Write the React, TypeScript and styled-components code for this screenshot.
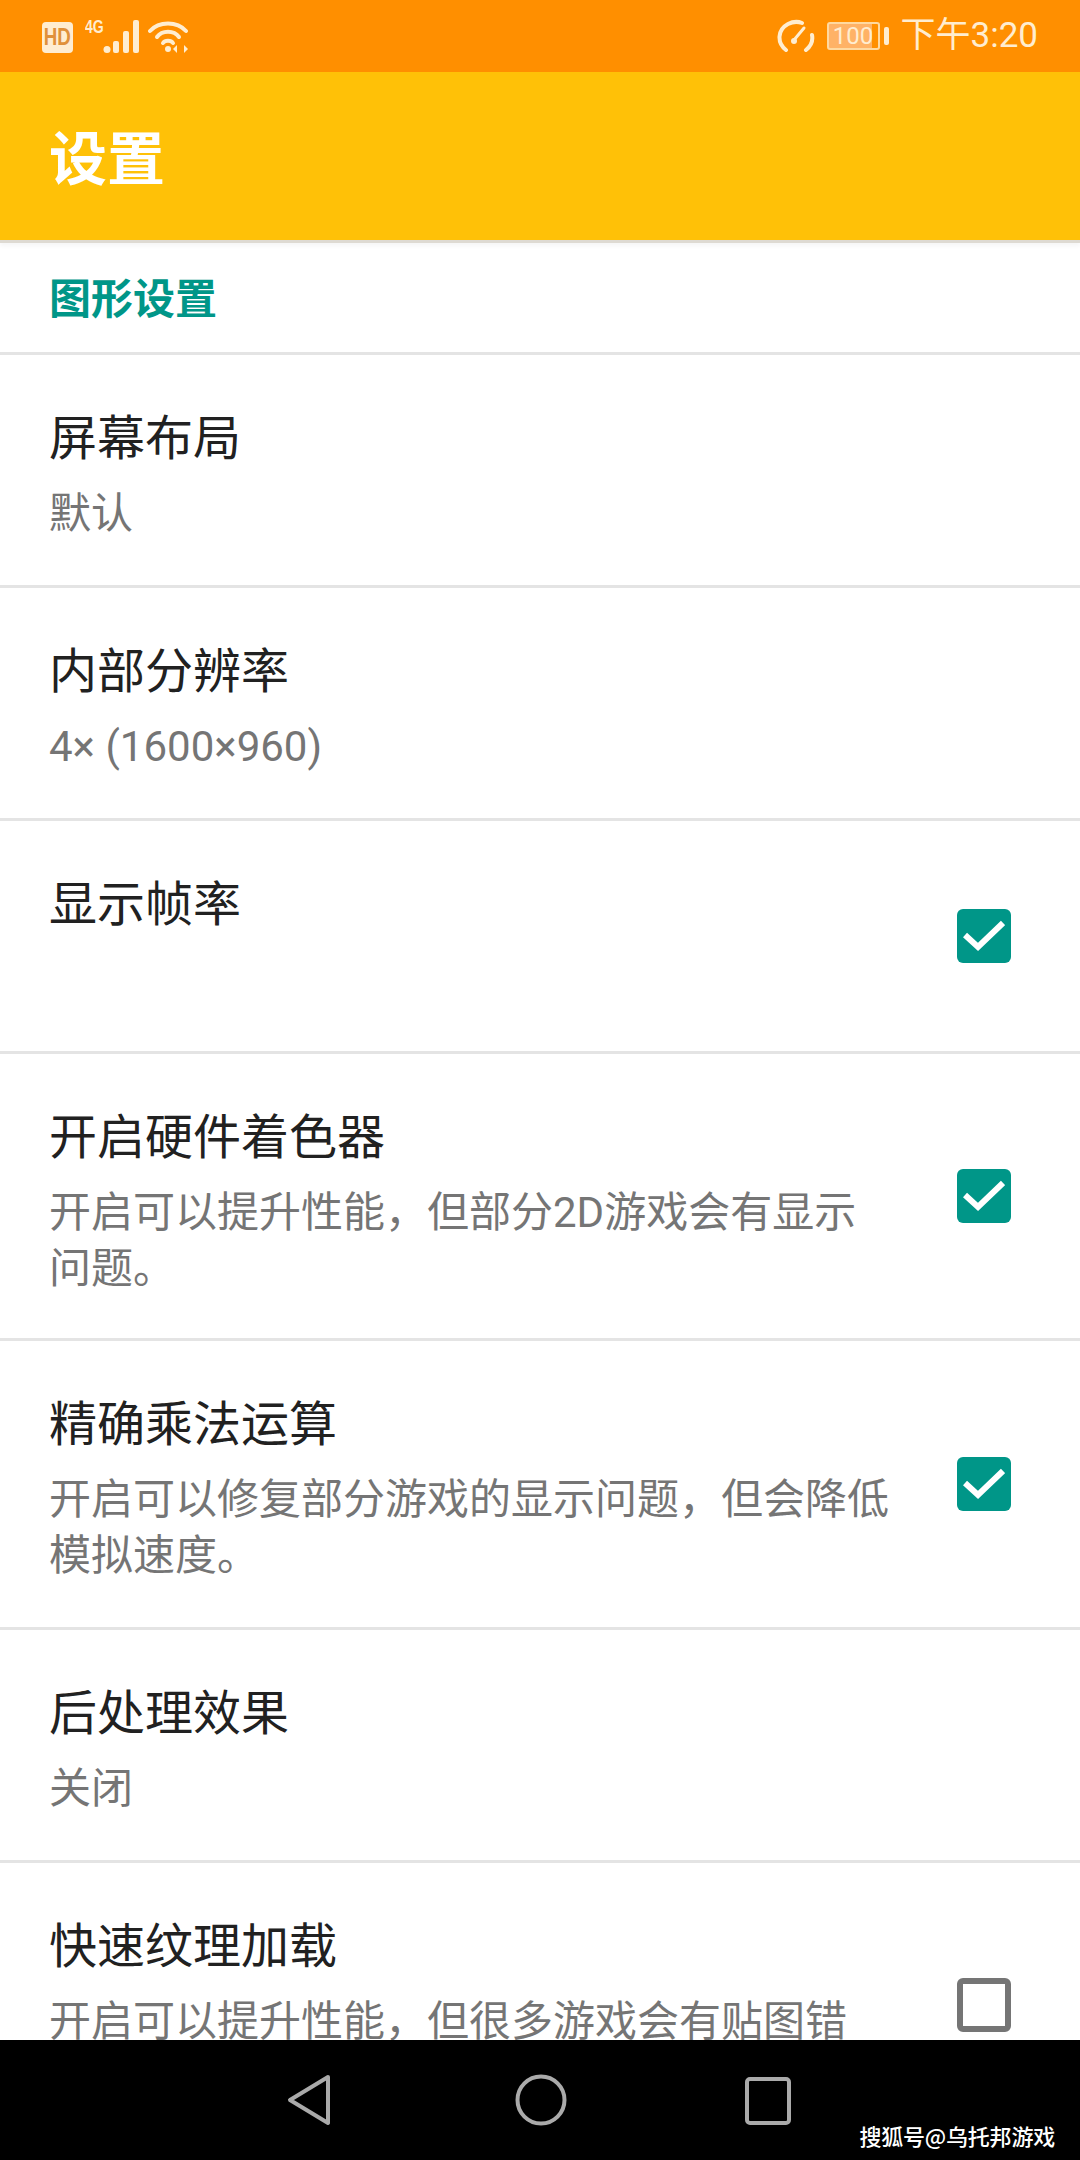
import styled, { createGlobalStyle } from 'styled-components';

const GlobalStyle = createGlobalStyle`
  html, body {
    margin: 0;
    padding: 0;
    background: #fff;
  }
  * {
    box-sizing: border-box;
  }
`;

const Screen = styled.div`
  width: 1080px;
  height: 2160px;
  display: flex;
  flex-direction: column;
  position: relative;
  overflow: hidden;
  font-family: 'Noto Sans CJK SC', 'Liberation Sans', sans-serif;
`;

const StatusBar = styled.div`
  height: 72px;
  flex: none;
  display: flex;
  align-items: center;
  justify-content: space-between;
  padding: 0 42px;
  background: #ff8f00;
  color: #ffedd0;
`;

const StatusGroup = styled.div`
  display: flex;
  align-items: center;
`;

const HdBadge = styled.div`
  width: 31px;
  height: 31px;
  margin-top: 2px;
  display: flex;
  align-items: center;
  justify-content: center;
  border-radius: 4px;
  background: #ffedd0;
  color: #e0913a;
  font-family: 'Liberation Sans', sans-serif;
  font-size: 24px;
  font-weight: 700;
`;

const HdText = styled.span`
  display: block;
  transform: scaleX(0.78);
`;

const NetworkLabel = styled.span`
  width: 18px;
  margin: -18px 0 0 12px;
  font-family: 'Liberation Sans', sans-serif;
  font-size: 18px;
  line-height: 14px;
  font-weight: 700;
  white-space: nowrap;
  transform: scaleX(0.78);
  transform-origin: left center;
`;

const SignalSvg = styled.svg`
  margin-top: 2px;
`;

const WifiSvg = styled.svg`
  margin: 2px 0 0 9px;
`;

const BatteryBody = styled.div`
  width: 53px;
  height: 28px;
  margin-left: 12px;
  display: flex;
  align-items: center;
  justify-content: center;
  border: 2px solid #ffd9a0;
  border-radius: 3px;
  background: linear-gradient(to right, #ffb266 0 88%, transparent 88%);
  font-family: 'Roboto', sans-serif;
  font-size: 24px;
  line-height: 24px;
`;

const BatteryCap = styled.div`
  width: 5px;
  height: 18px;
  margin-left: 4px;
  border-radius: 2px;
  background: #ffedd0;
`;

const Clock = styled.span`
  margin-left: 12px;
  font-family: 'Roboto', 'Noto Sans CJK SC', sans-serif;
  font-size: 35px;
  line-height: 40px;
`;

const Toolbar = styled.header`
  height: 168px;
  flex: none;
  display: flex;
  align-items: center;
  padding: 0 0 3px 49px;
  background: #ffc107;
  box-shadow: 0 3px 0 #dedad2, 0 6px 4px rgba(0, 0, 0, 0.04);
  position: relative;
  color: #fff;
  font-size: 58px;
  font-weight: 700;
`;

const List = styled.main`
  flex: 1;
  min-height: 0;
  overflow: hidden;
  background: #fff;
`;

const SectionTitle = styled.div`
  height: 115px;
  padding: 29px 0 0 49px;
  border-bottom: 3px solid #e4e4e4;
  color: #009688;
  font-size: 42px;
  line-height: 54px;
  font-weight: 700;
`;

const Row = styled.div<{ $minHeight: number }>`
  display: flex;
  align-items: center;
  justify-content: space-between;
  min-height: ${(props) => props.$minHeight}px;
  padding: 41px 69px 41px 49px;
  border-bottom: 3px solid #e4e4e4;
`;

const RowText = styled.div`
  width: 845px;
  padding-top: 6px;
  align-self: flex-start;
`;

const RowTitle = styled.div`
  color: #212121;
  font-size: 48px;
  line-height: 64px;
`;

const RowSummary = styled.div`
  margin-top: 20px;
  color: #757575;
  font-family: 'Roboto', 'Noto Sans CJK SC', sans-serif;
  font-size: 42px;
  line-height: 56px;
`;

const CheckBox = styled.div<{ $checked: boolean }>`
  width: 54px;
  height: 54px;
  flex: none;
  display: flex;
  align-items: center;
  justify-content: center;
  border-radius: 6px;
  background: ${(props) => (props.$checked ? '#009688' : 'transparent')};
  border: ${(props) => (props.$checked ? 'none' : '6px solid #757575')};
`;

const NavBar = styled.nav`
  height: 120px;
  flex: none;
  display: flex;
  align-items: flex-start;
  padding: 34px 0 0 287px;
  gap: 184px;
  background: #000;
`;

const RecentKey = styled.svg`
  margin: 2px 0 0 -6px;
`;

const Watermark = styled.span`
  position: absolute;
  right: 25px;
  bottom: 10px;
  color: #fff;
  font-size: 22px;
  line-height: 30px;
  font-weight: 500;
  letter-spacing: -0.2px;
`;

const rows = [
  { title: '屏幕布局', summary: '默认', minHeight: 233 },
  { title: '内部分辨率', summary: '4× (1600×960)', minHeight: 233 },
  { title: '显示帧率', checked: true, minHeight: 233 },
  { title: '开启硬件着色器', summary: '开启可以提升性能，但部分2D游戏会有显示问题。', checked: true, minHeight: 287 },
  { title: '精确乘法运算', summary: '开启可以修复部分游戏的显示问题，但会降低模拟速度。', checked: true, minHeight: 289 },
  { title: '后处理效果', summary: '关闭', minHeight: 233 },
  { title: '快速纹理加载', summary: '开启可以提升性能，但很多游戏会有贴图错误。', checked: false, minHeight: 287 },
];

function SignalIcon() {
  return (
    <SignalSvg width="36" height="34" viewBox="0 0 36 34" fill="#ffedd0">
      <circle cx="4" cy="29.5" r="3.5" />
      <rect x="10" y="21" width="6" height="12" rx="2" />
      <rect x="20" y="11" width="6" height="22" rx="2" />
      <rect x="30" y="0" width="6" height="33" rx="2" />
    </SignalSvg>
  );
}

function WifiIcon() {
  return (
    <WifiSvg width="42" height="34" viewBox="0 0 42 34" fill="none" stroke="#ffedd0" strokeWidth="4" strokeLinecap="round">
      <path d="M2 11 C11 1 29 1 38 11" />
      <path d="M9 17 C14 10 26 10 31 17" />
      <path d="M15 23 C17 20 23 20 25 23" />
      <circle cx="20" cy="29" r="3" fill="#ffedd0" stroke="none" />
      <path d="M29 25 L25 29 L29 33 Z M36 25 L40 29 L36 33 Z" fill="#ffedd0" stroke="none" />
    </WifiSvg>
  );
}

function GaugeIcon() {
  return (
    <svg width="38" height="34" viewBox="0 0 38 34" fill="none" stroke="#ffedd0" strokeWidth="4" strokeLinecap="round">
      <path d="M9 31 C0 24 0 11 11 5 C15 3 20 2 25 4" />
      <path d="M29 31 C34 27 36 21 35 16" />
      <path d="M17 21 L27 9" strokeWidth="3" />
      <circle cx="17" cy="22" r="3" fill="#ffedd0" stroke="none" />
    </svg>
  );
}

function CheckMark() {
  return (
    <svg width="42" height="32" viewBox="0 0 42 32" fill="none" stroke="#fff" strokeWidth="6">
      <path d="M2 15 L15 27 L40 3" />
    </svg>
  );
}

function App() {
  return (
    <Screen>
      <GlobalStyle />
      <StatusBar>
        <StatusGroup>
          <HdBadge>
            <HdText>HD</HdText>
          </HdBadge>
          <NetworkLabel>4G</NetworkLabel>
          <SignalIcon />
          <WifiIcon />
        </StatusGroup>
        <StatusGroup>
          <GaugeIcon />
          <BatteryBody>100</BatteryBody>
          <BatteryCap />
          <Clock>下午3:20</Clock>
        </StatusGroup>
      </StatusBar>
      <Toolbar>设置</Toolbar>
      <List>
        <SectionTitle>图形设置</SectionTitle>
        {rows.map((row) => (
          <Row key={row.title} $minHeight={row.minHeight}>
            <RowText>
              <RowTitle>{row.title}</RowTitle>
              {row.summary && <RowSummary>{row.summary}</RowSummary>}
            </RowText>
            {row.checked !== undefined && (
              <CheckBox $checked={row.checked}>{row.checked && <CheckMark />}</CheckBox>
            )}
          </Row>
        ))}
      </List>
      <NavBar>
        <svg width="44" height="52" viewBox="0 0 44 52" fill="none" stroke="#aaa" strokeWidth="4" strokeLinejoin="round">
          <path d="M41 3 L3 26 L41 49 Z" />
        </svg>
        <svg width="52" height="52" viewBox="0 0 52 52" fill="none" stroke="#aaa" strokeWidth="4">
          <circle cx="26" cy="26" r="23.5" />
        </svg>
        <RecentKey width="46" height="50" viewBox="0 0 46 50" fill="none" stroke="#aaa" strokeWidth="4">
          <rect x="2" y="3" width="42" height="44" rx="3" />
        </RecentKey>
      </NavBar>
      <Watermark>搜狐号@乌托邦游戏</Watermark>
    </Screen>
  );
}

export default App;
